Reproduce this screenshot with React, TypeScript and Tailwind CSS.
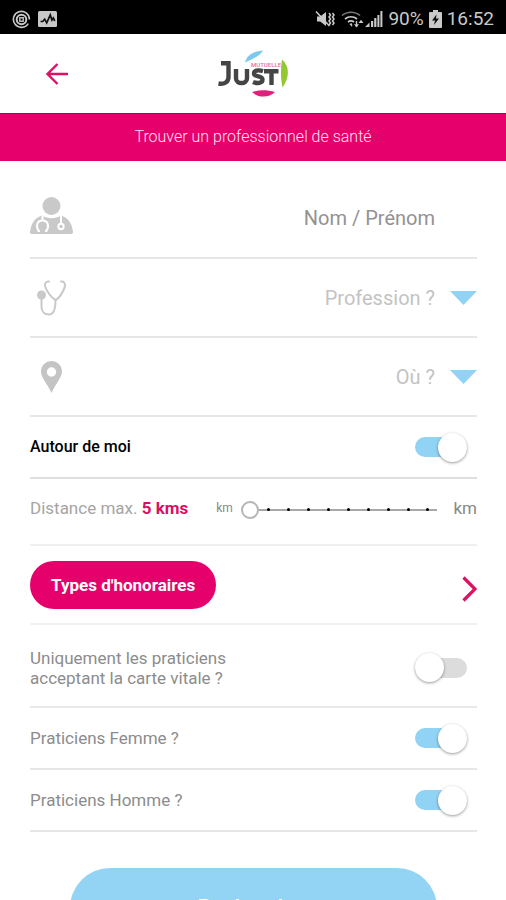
import { useState, type ReactNode } from "react";

function StatusBar() {
  return (
    <div className="flex h-[34px] shrink-0 items-center justify-between bg-black px-3 pt-1 text-[#c9c9c9]">
      <div className="flex items-center gap-[7px]">
        <svg width="19" height="19" viewBox="0 0 19 19" fill="none" stroke="currentColor" aria-hidden="true">
          <path d="M16.2 13.6A8 8 0 1 1 17.4 9.5" strokeWidth="1.6" />
          <circle cx="9.5" cy="9.5" r="4.8" strokeWidth="2" />
          <rect x="7.8" y="7.8" width="3.4" height="3.4" strokeWidth="1.4" />
        </svg>
        <svg width="19" height="16" viewBox="0 0 19 16" aria-hidden="true">
          <rect width="19" height="16" rx="1.5" fill="currentColor" />
          <path d="M2.5 10.5h2.2l2-2.3 2 3.6 3.6-8 1.6 5.2 1.4-2 1.5 3" fill="none" stroke="#111" strokeWidth="1.7" />
        </svg>
      </div>
      <div className="flex items-center">
        <svg width="20" height="18" viewBox="0 0 20 18" fill="none" stroke="currentColor" aria-hidden="true">
          <path d="M2 6.5h3.2L11 2v14l-5.800-4.500H2z" fill="currentColor" stroke="none" />
          <path d="M1 1.500 14.500 16" strokeWidth="1.600" />
          <path d="m14 3 1.500 2-1.500 2 1.500 2L14 11l1.500 2-1.500 2M17.500 3 19 5l-1.500 2L19 9l-1.500 2 1.500 2-1.500 2" strokeWidth="1.500" />
        </svg>
        <svg className="ml-[6px]" width="23" height="18" viewBox="0 0 23 18" fill="none" stroke="currentColor" aria-hidden="true">
          <path d="M1 5.500c5-4.500 13-4.500 18 0" strokeWidth="1.500" opacity=".6" />
          <path d="M4 9c3.500-3 8.500-3 12 0M7 12c2-1.600 4-1.600 6 0" strokeWidth="1.700" />
          <path d="m8.500 14 2-1 1 2.500-1 1z" fill="currentColor" stroke="none" />
          <path d="M15.500 11v6" strokeWidth="1.400" />
          <path d="M13 14.200h5l-2.500 3.300zM17.500 13h5L20 9.700z" fill="currentColor" stroke="none" />
        </svg>
        <svg className="ml-[1px]" width="18" height="18" viewBox="0 0 18 18" fill="currentColor" aria-hidden="true">
          <path d="M0 17 4.500 12.500V17zM6 11h2.200v6H6zM9.200 8h2.200v9H9.200zM12.400 5h2v12h-2zM15.400 1h2v16h-2z" />
        </svg>
        <span className="ml-[5px] text-[19px] leading-6">90%</span>
        <svg className="ml-[5px]" width="13" height="18" viewBox="0 0 13 18" aria-hidden="true">
          <path d="M4 0h5v2h3a1 1 0 0 1 1 1v14a1 1 0 0 1-1 1H1a1 1 0 0 1-1-1V3a1 1 0 0 1 1-1h3z" fill="currentColor" />
          <path d="M7.500 4.500 3 10.500h3L5 15l5-6.500H7z" fill="#111" />
        </svg>
        <span className="ml-[5px] text-[19px] leading-6">16:52</span>
      </div>
    </div>
  );
}

function Logo() {
  return (
    <svg width="72" height="50" viewBox="0 0 72 50" role="img" aria-label="Just Mutuelle">
      <path d="M28 13.500C30 6 36 2.500 46 1.500 43 6.500 37 9.500 28 13.500z" fill="#7cc8ee" />
      <path d="M65 10.500c8 7 7.500 18 .5 28-2-9-2-19-.5-28z" fill="#93c832" />
      <path d="M35 43c7-2.200 15-2.200 23 0-6 6-17 6-23 0z" fill="#e0207c" />
      <text x="34" y="18" fontFamily="Roboto, sans-serif" fontSize="6" fontWeight="500" fill="#ea6aa6">MUTUELLE</text>
      <g fill="none" stroke="#454545" strokeWidth="4.400">
        <path d="M4 14.200h7.500V28c0 5-4 7.500-10 6.500" />
        <path d="M19 20v9.500c0 6 11 6 11 0V20" />
        <path d="M46 22.200c-5-1.500-9-.8-9 2.200 0 4 8.500 2 8.500 6 0 4-5.500 4.200-9.500 2.600" />
        <path d="M47 22.200h14.500M54.500 22.200V36" />
      </g>
    </svg>
  );
}

function DoctorIcon() {
  return (
    <svg width="43" height="38" viewBox="0 0 43 38" aria-hidden="true">
      <circle cx="21.500" cy="9" r="9" fill="#c9c9c9" />
      <path d="M12 18.500c6 3.500 13 3.500 19 0 7 2 11 8 12 16.500 0 1.300-.5 2-2 2H2c-1.500 0-2-.7-2-2 1-8.500 5-14.500 12-16.500z" fill="#c9c9c9" />
      <g fill="none" stroke="#fff" strokeWidth="2">
        <path d="M12.500 18.500v4M10 34H8.500c-3-5-1.500-10.500 4-10.500s7 5.500 4 10.500H15" />
        <path d="M31 18.500v8.500" />
        <circle cx="31" cy="29.500" r="2.700" />
      </g>
    </svg>
  );
}

function StethoscopeIcon() {
  return (
    <svg width="43" height="36" viewBox="0 0 43 36" fill="none" stroke="#c9c9c9" strokeWidth="2" strokeLinecap="round" aria-hidden="true">
      <circle cx="11.500" cy="15" r="4.500" fill="#c9c9c9" stroke="none" />
      <path d="M19 1.500c-3-.5-4.500 2-4 4.500 1 4 6 12 10.500 14C30 18 34.500 9 35 6c.3-3-1.500-5-4-4.500" />
      <path d="M11.500 19v8c0 4.500 3 7.500 7.500 7.500 5 0 6.500-5 6.500-14.500" />
    </svg>
  );
}

function PinIcon() {
  return (
    <svg width="43" height="32" viewBox="0 0 43 32" aria-hidden="true">
      <path fillRule="evenodd" d="M21.500 0C27 0 32 4.500 32 10.500c0 6-6 11.500-10.500 21.500C17 22 11 16.500 11 10.500 11 4.500 16 0 21.500 0zm0 6.300a4.700 4.700 0 1 0 0 9.400 4.700 4.700 0 0 0 0-9.400z" fill="#c4c4c4" />
    </svg>
  );
}

function SelectRow({ icon, label, name }: { icon: ReactNode; label: string; name: string }) {
  return (
    <div className="flex h-[79px] items-center border-b-2 border-[#e6e6e6]">
      <label htmlFor={name} aria-label={label}>{icon}</label>
      <select
        id={name}
        className="min-w-0 flex-1 appearance-none bg-transparent text-[20px] leading-6 text-[#c3c3c3] outline-none [text-align-last:right]"
      >
        <option>{label}</option>
      </select>
      <svg className="ml-[15px]" width="27" height="14" viewBox="0 0 27 14" aria-hidden="true">
        <path d="M0 0h27L13.500 14z" fill="#91d3f5" />
      </svg>
    </div>
  );
}

function Switch({ id, initial }: { id: string; initial: boolean }) {
  const [on, setOn] = useState(initial);
  return (
    <input
      id={id}
      type="checkbox"
      role="switch"
      checked={on}
      onChange={() => setOn(!on)}
      className="mr-[10px] flex h-5 w-[52px] shrink-0 appearance-none items-center rounded-full bg-[#dcdcdc] before:block before:size-[29px] before:shrink-0 before:rounded-full before:bg-white before:shadow-[0_1px_3px_rgba(0,0,0,0.4)] checked:justify-end checked:bg-[#91d3f5]"
    />
  );
}

const ticks = [1, 2, 3, 4, 5, 6, 7, 8, 9];

export default function App() {
  const [distance, setDistance] = useState(5);
  return (
    <div className="flex h-screen flex-col overflow-hidden bg-white font-[Roboto,sans-serif]">
      <StatusBar />
      <header className="grid h-[79px] shrink-0 grid-cols-[1fr_auto_1fr] items-center px-[45px]">
        <button type="button" aria-label="Retour" className="justify-self-start text-[#dc1264]">
          <svg width="24" height="24" viewBox="0 0 24 24" fill="none" stroke="currentColor" strokeWidth="2.400" aria-hidden="true">
            <path d="M23 12H2.500M12.500 2 2.500 12l10 10" />
          </svg>
        </button>
        <Logo />
      </header>
      <h1 className="flex h-12 shrink-0 items-center justify-center border-t border-[#b0004f] bg-[#e6006c] pb-[2px] text-[16px] leading-5 font-light text-[#ffe3f0]">
        Trouver un professionnel de santé
      </h1>

      <main className="flex min-h-0 flex-1 flex-col overflow-y-auto pt-[18px] pr-[29px] pl-[30px] [scrollbar-width:none] *:shrink-0">
        <div className="flex h-20 items-center border-b-2 border-[#e6e6e6]">
          <label htmlFor="nom" aria-label="Nom / Prénom" className="pb-1"><DoctorIcon /></label>
          <input
            id="nom"
            type="text"
            placeholder="Nom / Prénom"
            className="min-w-0 flex-1 pr-[42px] text-right text-[20px] leading-6 text-[#8c8c8c] outline-none placeholder:text-[#929292]"
          />
        </div>
        <SelectRow icon={<StethoscopeIcon />} label="Profession ?" name="profession" />
        <SelectRow icon={<PinIcon />} label="Où ?" name="lieu" />

        <div className="flex h-[62px] items-center justify-between border-b-2 border-[#dfdfdf]">
          <label htmlFor="autour" className="text-[16px] leading-5 font-medium text-black">Autour de moi</label>
          <Switch id="autour" initial={true} />
        </div>

        <div className="flex h-[67px] items-center border-b-2 border-[#f0f0f0] pb-2">
          <label htmlFor="distance" className="text-[17px] leading-5 text-[#a5a5a5]">
            Distance max. <strong className="font-bold text-[#d90f63]">{distance} kms</strong>
          </label>
          <span className="ml-7 text-[12px] leading-5 text-[#888]">km</span>
          <div className="relative mr-4 ml-2 flex flex-1 items-center pt-1">
            <div className="absolute right-0 left-2 flex h-[2px] items-center justify-between bg-[#a8a8a8] pr-2 pl-[18px]">
              {ticks.map((t) => (
                <span key={t} className="size-[3px] rounded-full bg-black" />
              ))}
            </div>
            <input
              id="distance"
              type="range"
              min={5}
              max={50}
              step={5}
              value={distance}
              onChange={(e) => setDistance(Number(e.target.value))}
              className="relative h-[18px] w-full appearance-none bg-transparent [&::-webkit-slider-thumb]:size-[18px] [&::-webkit-slider-thumb]:appearance-none [&::-webkit-slider-thumb]:rounded-full [&::-webkit-slider-thumb]:border-2 [&::-webkit-slider-thumb]:border-[#b5b5b5] [&::-webkit-slider-thumb]:bg-white"
            />
          </div>
          <span className="text-[17px] leading-5 text-[#888]">km</span>
        </div>

        <div className="flex h-[79px] items-center justify-between border-b-2 border-[#f0f0f0]">
          <button type="button" className="h-12 rounded-full bg-[#e6006c] px-[21px] text-[17px] leading-5 font-bold text-white">
            Types d'honoraires
          </button>
          <button type="button" aria-label="Ouvrir les types d'honoraires" className="pt-2 text-[#dc1264]">
            <svg width="15" height="26" viewBox="0 0 15 26" fill="none" stroke="currentColor" strokeWidth="3.200" aria-hidden="true">
              <path d="M1.500 1.500 13 13 1.500 24.500" />
            </svg>
          </button>
        </div>

        <div className="flex h-[83px] items-center justify-between border-b-2 border-[#e9e9e9] pt-1">
          <label htmlFor="vitale" className="text-[17px] leading-5 text-[#8c8c8c]">
            Uniquement les praticiens
            <br />
            acceptant la carte vitale ?
          </label>
          <Switch id="vitale" initial={false} />
        </div>
        <div className="flex h-[62px] items-center justify-between border-b-2 border-[#e6e6e6]">
          <label htmlFor="femme" className="text-[17px] leading-5 text-[#8c8c8c]">Praticiens Femme ?</label>
          <Switch id="femme" initial={true} />
        </div>
        <div className="flex h-[62px] items-center justify-between border-b-2 border-[#e6e6e6]">
          <label htmlFor="homme" className="text-[17px] leading-5 text-[#8c8c8c]">Praticiens Homme ?</label>
          <Switch id="homme" initial={true} />
        </div>

        <button type="button" className="mx-10 mt-9 h-20 rounded-full bg-[#93d4f5] text-[22px] leading-6 font-medium text-white">
          Rechercher
        </button>
      </main>
    </div>
  );
}
